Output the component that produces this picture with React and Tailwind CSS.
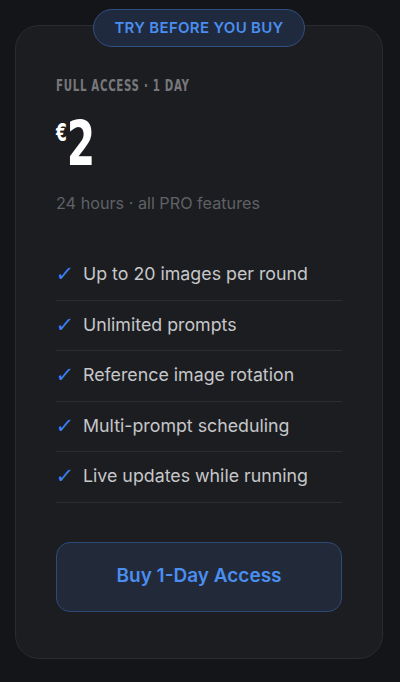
const features = [
  "Up to 20 images per round",
  "Unlimited prompts",
  "Reference image rotation",
  "Multi-prompt scheduling",
  "Live updates while running",
];

export default function App() {
  return (
    <div className="min-h-screen w-full bg-[#141518] pt-[25px] pb-[22px] font-['Inter',sans-serif]">
      <div className="relative mx-[15px] w-[368px] rounded-[24px] border border-[#2a2b2f] bg-[#1c1d20] px-10 pt-[50px] pb-[46px]">
        <div className="absolute -top-[17px] left-1/2 flex h-[38px] w-[212px] -translate-x-1/2 items-center justify-center rounded-full border border-[#2f4f82] bg-[#1f2a3e] text-[15px] font-semibold tracking-[0.02em] text-[#4a8ef0]">
          TRY BEFORE YOU BUY
        </div>

        <div className="h-5 origin-left scale-x-[0.69] whitespace-nowrap font-['DejaVu_Sans_Condensed','DejaVu_Sans',sans-serif] text-[16.5px] leading-5 font-bold tracking-[0.06em] text-[#77787c]">
          FULL ACCESS · 1 DAY
        </div>

        <div className="mt-4 flex h-[64px] origin-left scale-x-[0.72] items-start font-['DejaVu_Sans_Condensed','DejaVu_Sans',sans-serif] font-bold text-white">
          <span className="mt-[9px] text-[24px] leading-none">€</span>
          <span className="text-[63px] leading-[64px]">2</span>
        </div>

        <div className="mt-[17px] h-5 text-[16.2px] leading-5 text-[#5f6166]">
          24 hours · all PRO features
        </div>

        <ul className="mt-[37px]">
          {features.map((f) => (
            <li
              key={f}
              className="flex h-[50.5px] items-center gap-[12px] border-b border-[#2c2d31] text-[17.8px] text-[#c6c7ca]"
            >
              <span className="w-[15px] -skew-x-6 font-['DejaVu_Sans',sans-serif] text-[21px] leading-none text-[#3b82f6]">✓</span>
              <span>{f}</span>
            </li>
          ))}
        </ul>

        <button className="mt-[39px] flex h-[70px] w-full items-center justify-center rounded-[14px] border border-[#2c4a78] bg-[#222a3a] text-[19px] font-semibold text-[#4a8ef0]">
          Buy 1-Day Access
        </button>
      </div>
    </div>
  );
}
